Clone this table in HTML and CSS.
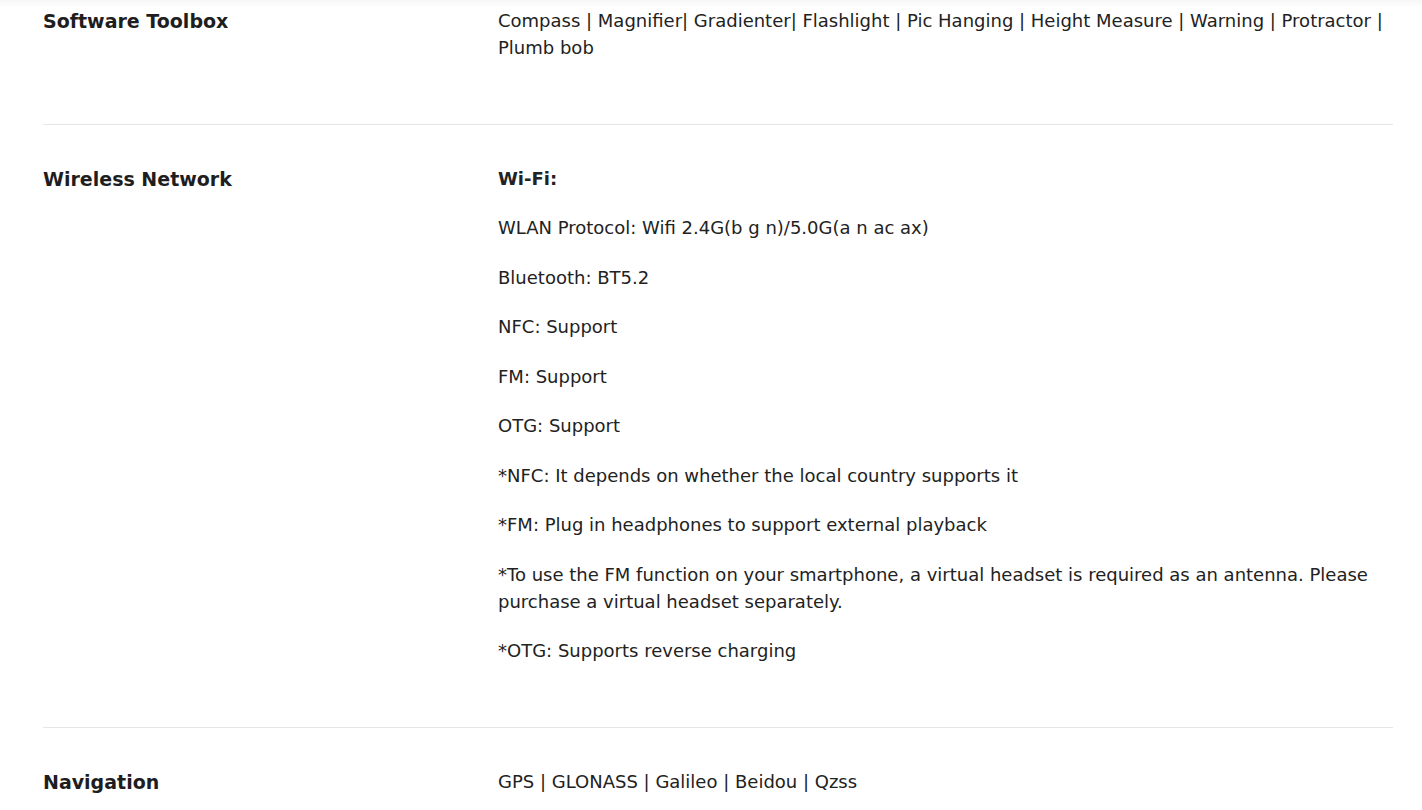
FILE: index.html
```html
<!DOCTYPE html>
<html lang="en">
<head>
<meta charset="utf-8">
<title>Specifications</title>
<link rel="stylesheet" href="styles.css">
</head>
<body>
<div class="top-shadow"></div>
<main class="specs">
  <section class="spec-row first">
    <h3 class="spec-label">Software Toolbox</h3>
    <div class="spec-value">
      <p>Compass | Magnifier| Gradienter| Flashlight | Pic Hanging | Height Measure | Warning | Protractor | Plumb bob</p>
    </div>
  </section>
  <section class="spec-row">
    <h3 class="spec-label">Wireless Network</h3>
    <div class="spec-value">
      <p><strong>Wi-Fi:</strong></p>
      <p>WLAN Protocol: Wifi 2.4G(b g n)/5.0G(a n ac ax)</p>
      <p>Bluetooth: BT5.2</p>
      <p>NFC: Support</p>
      <p>FM: Support</p>
      <p>OTG: Support</p>
      <p>*NFC: It depends on whether the local country supports it</p>
      <p>*FM: Plug in headphones to support external playback</p>
      <p>*To use the FM function on your smartphone, a virtual headset is required as an antenna. Please purchase a virtual headset separately.</p>
      <p>*OTG: Supports reverse charging</p>
    </div>
  </section>
  <section class="spec-row">
    <h3 class="spec-label">Navigation</h3>
    <div class="spec-value">
      <p>GPS | GLONASS | Galileo | Beidou | Qzss</p>
    </div>
  </section>
</main>
</body>
</html>
```
FILE: styles.css
```css
* { box-sizing: border-box; }
html, body { margin: 0; padding: 0; background: #fff; }
body {
  font-family: "DejaVu Sans", "Noto Sans", sans-serif;
  color: #222;
  overflow: hidden;
}
.top-shadow {
  position: fixed;
  top: 0; left: 0; right: 0;
  height: 8px;
  background: linear-gradient(to bottom, rgba(0,0,0,0.03), rgba(0,0,0,0));
  pointer-events: none;
}
.specs {
  margin: -33px 29px 0 43px;
}
.spec-row {
  display: grid;
  grid-template-columns: 455px 1fr;
  padding: 40px 0 40px;
  border-bottom: 1px solid #e6e6e6;
}
.spec-label {
  margin: 0;
  padding-top: 1px;
  font-size: 19px;
  font-weight: 700;
  line-height: 27px;
  color: #1e1e1e;
}
.spec-value p {
  margin: 0 0 22.5px;
  font-size: 18px;
  line-height: 27px;
  color: #222;
}
.spec-value strong { font-weight: 700; }
```
